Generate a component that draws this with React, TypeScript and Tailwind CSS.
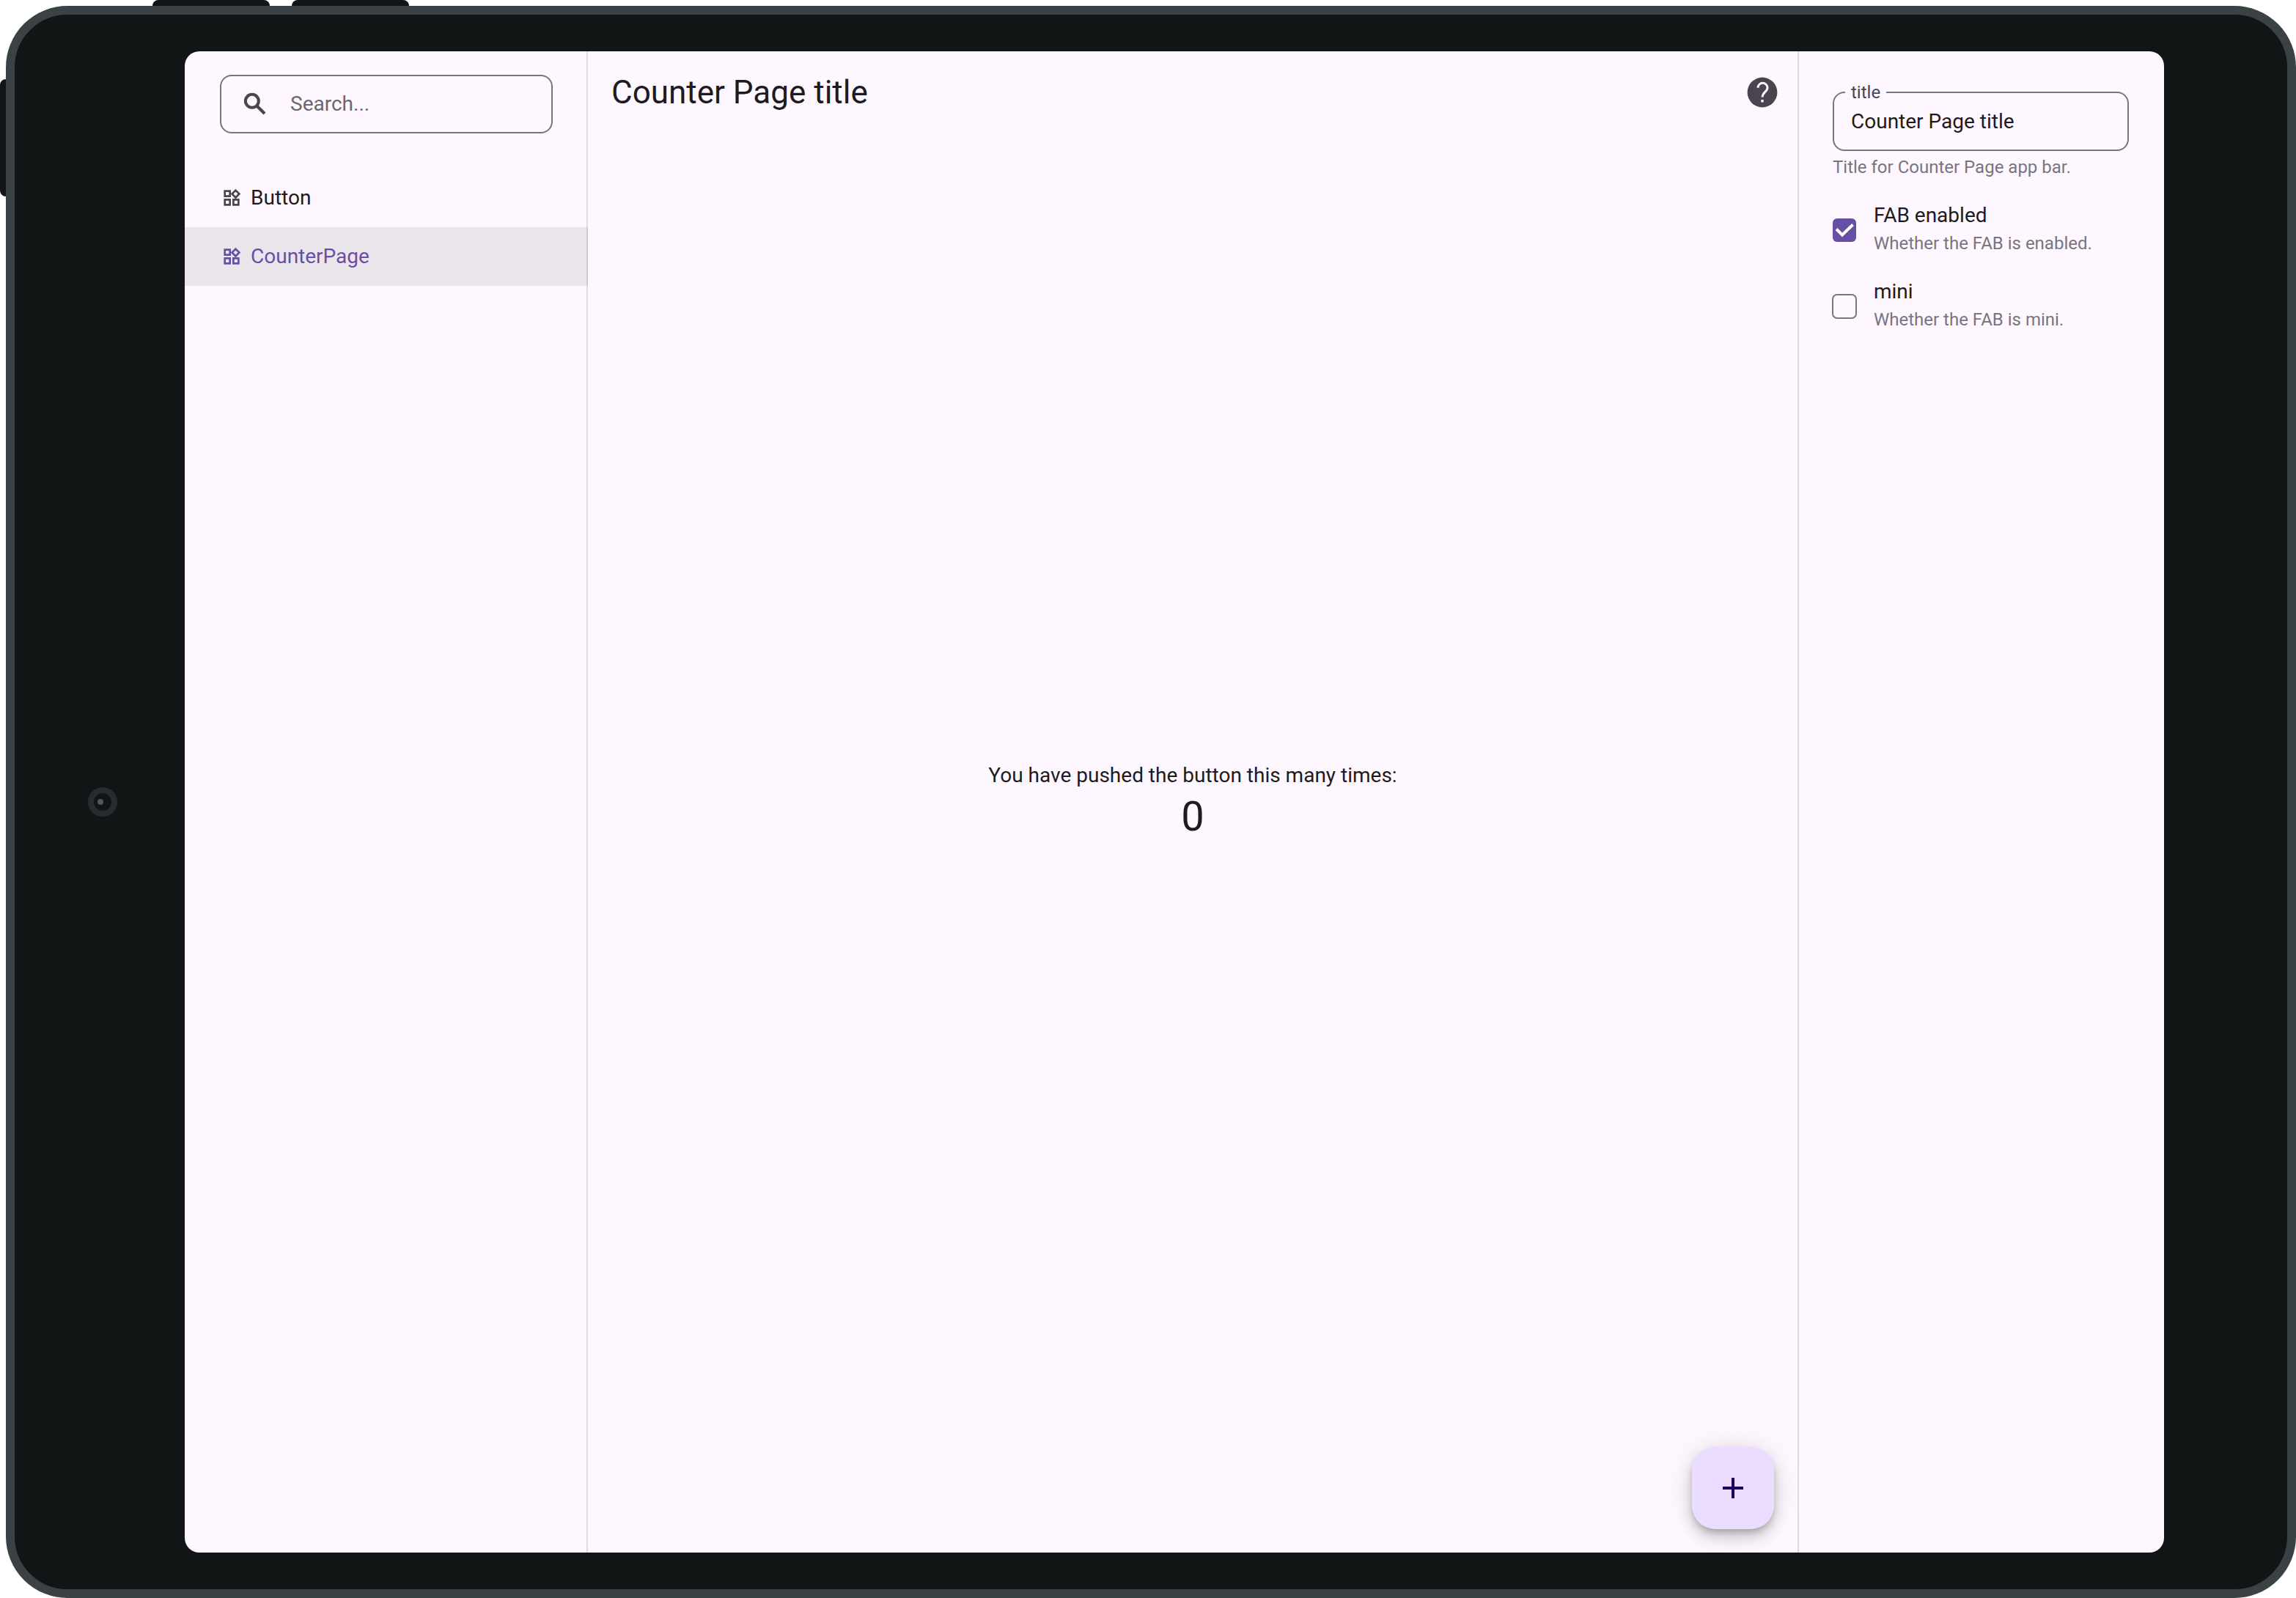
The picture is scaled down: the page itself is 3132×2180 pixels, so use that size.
import { useState } from "react";
import type { ReactNode } from "react";
import { MdAdd } from "react-icons/md";

function HelpIcon() {
  return (
    <svg viewBox="0 0 24 24" className="size-12" fill="none">
      <circle cx="12" cy="12" r="10.2" fill="currentColor" />
      <path d="M9 8.9a3.25 3.25 0 0 1 6.5 0c0 2.6-3.5 3.1-3.5 6.4" stroke="#fef7ff" strokeWidth="1.5" />
      <path d="M11.15 17h1.7v1.7h-1.7z" fill="#fef7ff" />
    </svg>
  );
}

function SearchIcon() {
  return (
    <svg viewBox="0 0 24 24" className="size-10 shrink-0 text-[#49454f]" fill="none" stroke="currentColor" strokeWidth="2.4">
      <circle cx="9.5" cy="9.5" r="5.4" />
      <path d="M13.6 13.6l6.2 6.2" strokeWidth="2.6" />
    </svg>
  );
}

function WidgetsIcon() {
  return (
    <svg viewBox="0 0 24 24" className="size-7 shrink-0" fill="none" stroke="currentColor" strokeWidth="2.3">
      <path d="M4 4h6v6H4zM4 14h6v6H4zM14 14h6v6h-6zM16.66 3.1l4.24 4.24-4.24 4.24-4.24-4.24z" />
    </svg>
  );
}

function NavItem({ label, active, onSelect }: { label: string; active: boolean; onSelect: () => void }) {
  return (
    <button
      type="button"
      onClick={onSelect}
      aria-current={active ? "page" : undefined}
      className={
        active
          ? "flex h-20 w-full items-center gap-3 bg-[#404d40]/10 pl-[50px] text-[28px] leading-10 text-[#6750a4]"
          : "flex h-20 w-full items-center gap-3 pl-[50px] text-[28px] leading-10 text-[#1d1b20]"
      }
    >
      <span className={active ? "text-[#6750a4]" : "text-[#49454f]"}>
        <WidgetsIcon />
      </span>
      <span>{label}</span>
    </button>
  );
}

function Knob({
  id,
  label,
  description,
  checked,
  onChange,
}: {
  id: string;
  label: string;
  description: string;
  checked: boolean;
  onChange: (value: boolean) => void;
}) {
  return (
    <div className="flex h-[104px] items-center gap-6">
      <span className="relative flex size-8 shrink-0">
        <input
          id={id}
          type="checkbox"
          checked={checked}
          onChange={(e) => onChange(e.target.checked)}
          className="size-8 appearance-none rounded-[6px] outline-2 -outline-offset-1 outline-[#79747e] checked:bg-[#6750a4] checked:outline-0"
        />
        {checked && (
          <svg viewBox="0 0 32 32" className="pointer-events-none absolute inset-0" fill="none" stroke="#fff" strokeWidth="4">
            <path d="M5 14.5l8 8L27.5 8.5" />
          </svg>
        )}
      </span>
      <label htmlFor={id} className="flex flex-col pb-1">
        <span className="text-[28px] leading-10 text-[#1d1b20]">{label}</span>
        <span className="text-2xl leading-9 text-[#79747e]">{description}</span>
      </label>
    </div>
  );
}

function Screen({ children }: { children: ReactNode }) {
  return (
    <div className="relative flex h-screen min-h-[800px] pt-2 pl-2 font-['Roboto',sans-serif]">
      <div className="absolute top-0 left-[208px] h-2 w-40 rounded-t-lg bg-[#121515]" />
      <div className="absolute top-0 left-[398px] h-2 w-40 rounded-t-lg bg-[#121515]" />
      <div className="absolute top-[108px] left-0 h-40 w-2 rounded-l-lg bg-[#121515]" />
      <div className="flex flex-1 rounded-[84px] border-[12px] border-[#3a4245] bg-[#121515] py-[50px] pr-[168px]">
        <div className="flex w-[232px] shrink-0 items-center pl-[100px]">
          <div className="flex size-10 items-center rounded-full border-8 border-[#262c2f] pl-[5px]">
            <div className="size-2 rounded-full bg-[#4b595f]" />
          </div>
        </div>
        <div className="flex flex-1 overflow-hidden rounded-[20px] bg-[#fef7ff]">{children}</div>
      </div>
    </div>
  );
}

export default function App() {
  const [page, setPage] = useState("CounterPage");
  const [query, setQuery] = useState("");
  const [title, setTitle] = useState("Counter Page title");
  const [fab, setFab] = useState(true);
  const [mini, setMini] = useState(false);
  const [count, setCount] = useState(0);

  return (
    <Screen>
      <aside className="w-[550px] shrink-0 border-r-2 border-[#dfd9e0] pt-8">
        <div className="mr-[46px] ml-12 flex h-20 items-center gap-7 rounded-2xl border-2 border-[#79747e] pl-[26px]">
          <SearchIcon />
          <input
            type="text"
            aria-label="Search"
            placeholder="Search..."
            value={query}
            onChange={(e) => setQuery(e.target.value)}
            className="w-full min-w-0 bg-transparent text-[28px] leading-10 text-[#1d1b20] outline-none placeholder:text-[#6b676c]"
          />
        </div>
        <nav className="-mr-0.5 mt-12">
          {["Button", "CounterPage"].map((name) => (
            <NavItem key={name} label={name} active={page === name} onSelect={() => setPage(name)} />
          ))}
        </nav>
      </aside>

      <main className="relative flex flex-1 flex-col">
        <header className="flex h-28 items-center justify-between pr-6 pl-8">
          <h1 className="text-[44px] leading-[56px] text-[#1d1b20]">{title}</h1>
          <button type="button" aria-label="Help" className="text-[#49454f]">
            <HelpIcon />
          </button>
        </header>
        <div className="flex flex-1 flex-col items-center justify-center pb-28 text-[#1d1b20]">
          <p className="text-[28px] leading-10">You have pushed the button this many times:</p>
          <p className="text-[56px] leading-[72px]">{count}</p>
        </div>
        <button
          type="button"
          aria-label="Increment"
          disabled={!fab}
          onClick={() => setCount(count + 1)}
          className="absolute right-8 bottom-8 flex size-28 items-center justify-center rounded-[32px] bg-[#eaddff] text-[#21005d] shadow-[0_6px_10px_-2px_rgba(0,0,0,0.2),0_12px_20px_0_rgba(0,0,0,0.14),0_2px_36px_0_rgba(0,0,0,0.12)]"
        >
          <MdAdd className="size-12" />
        </button>
      </main>

      <aside className="w-[500px] shrink-0 border-l-2 border-[#dfd9e0] pt-[38px] pr-12 pl-[46px]">
        <fieldset className="h-[98px] rounded-2xl border-2 border-[#79747e] px-[15px]">
          <legend className="px-2 text-2xl leading-9 text-[#49454f]">
            <label htmlFor="title">title</label>
          </legend>
          <input
            id="title"
            type="text"
            value={title}
            onChange={(e) => setTitle(e.target.value)}
            className="mt-0.5 block w-full bg-transparent px-2 text-[28px] leading-10 text-[#1d1b20] outline-none"
          />
        </fieldset>
        <p className="mt-1 text-2xl leading-9 text-[#79747e]">Title for Counter Page app bar.</p>
        <div className="mt-4">
          <Knob id="fab" label="FAB enabled" description="Whether the FAB is enabled." checked={fab} onChange={setFab} />
          <Knob id="mini" label="mini" description="Whether the FAB is mini." checked={mini} onChange={setMini} />
        </div>
      </aside>
    </Screen>
  );
}
